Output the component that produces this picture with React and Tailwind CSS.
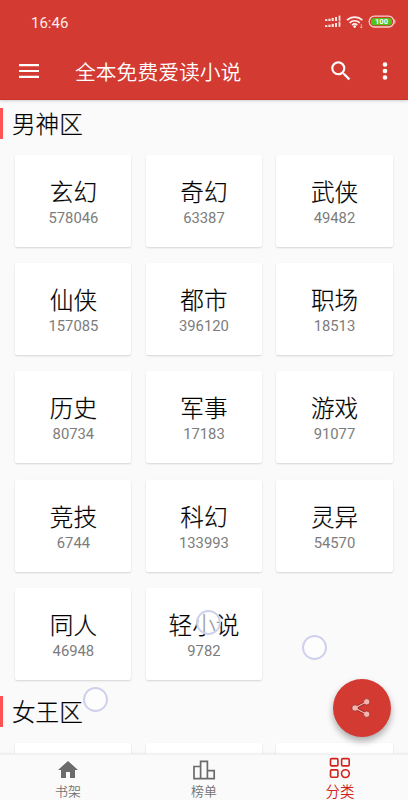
import React from "react";

const MALE = [
  ["玄幻", "578046"],
  ["奇幻", "63387"],
  ["武侠", "49482"],
  ["仙侠", "157085"],
  ["都市", "396120"],
  ["职场", "18513"],
  ["历史", "80734"],
  ["军事", "17183"],
  ["游戏", "91077"],
  ["竞技", "6744"],
  ["科幻", "133993"],
  ["灵异", "54570"],
  ["同人", "46948"],
  ["轻小说", "9782"],
];

function StatusIcons() {
  return (
    <svg width="72" height="14" viewBox="0 0 72 14" fill="none">
      {[0, 6].map((y) => (
        <g key={y} fill="#fbe3e1">
          <rect x="0" y={4.2 + y} width="2.4" height="1.8" />
          <rect x="3.4" y={3.7 + y} width="2.2" height="2.3" />
          <rect x="6.6" y={2.9 + y} width="2.2" height="3.1" />
          <rect x="10" y={2 + y} width="2" height="4" />
          <rect x="13.6" y={0.6 + y} width="1.8" height="5.2" />
        </g>
      ))}
      <g stroke="#fdeeed" strokeWidth="1.7">
        <path d="M22 5.2a11 11 0 0 1 15.4 0" />
        <path d="M24.6 7.8a7.4 7.4 0 0 1 10.2 0" />
        <path d="M27.1 10.2a3.8 3.8 0 0 1 5.2 0" />
      </g>
      <circle cx="29.7" cy="11.6" r="1.3" fill="#fff" />
      <path d="M36.3 9v4M35.2 11.8l1.1 1.2 1.1-1.2" stroke="#f5c5c2" strokeWidth=".8" />
      <rect x="44.2" y="1.2" width="24.6" height="10.8" rx="5.2" stroke="#f7d0cc" strokeWidth="1.3" />
      <rect x="46" y="2.9" width="21" height="7.4" rx="3.6" fill="#4fc41a" />
      <path d="M69.8 4.6v4" stroke="#f7d0cc" strokeWidth="1" />
      <text x="56.5" y="9.4" textAnchor="middle" fill="#fff" fontSize="7.6" fontWeight="700" fontFamily="Roboto, sans-serif">100</text>
    </svg>
  );
}

function Header() {
  return (
    <header className="relative z-10 h-[100px] shrink-0 border-b border-[#c9342e] bg-[#d33a32] text-white shadow-[0_1px_3px_rgba(0,0,0,0.18)]">
      <div className="flex h-11 items-center justify-between pr-[11px] pl-[31px]">
        <span className="pt-px text-[15px] leading-5 text-[#fdebea]">16:46</span>
        <StatusIcons />
      </div>
      <div className="flex h-[54px] items-center pr-[13px] pl-[19px]">
        <svg width="20" height="14" viewBox="0 0 20 14" fill="#fff">
          <path d="M0 0h20v2.2H0zM0 5.9h20v2.2H0zM0 11.8h20V14H0z" />
        </svg>
        <h1 className="ml-9 flex-1 pt-[3px] text-[20.8px] leading-7 font-[350] whitespace-nowrap">全本免费爱读小说</h1>
        <svg width="26" height="26" viewBox="0 0 24 24" fill="#fff" className="mr-[21px]">
          <path d="M15.5 14h-.79l-.28-.27A6.471 6.471 0 0 0 16 9.5 6.5 6.5 0 1 0 9.5 16c1.61 0 3.09-.59 4.23-1.57l.27.28v.79l5 4.99L20.49 19l-4.99-5zm-6 0C7.01 14 5 11.99 5 9.5S7.01 5 9.5 5 14 7.01 14 9.5 11.99 14 9.5 14z" />
        </svg>
        <svg width="20" height="18" viewBox="0 0 20 18" fill="#fff">
          <circle cx="10" cy="2.5" r="2.3" />
          <circle cx="10" cy="9" r="2.3" />
          <circle cx="10" cy="15.5" r="2.3" />
        </svg>
      </div>
    </header>
  );
}

function SectionTitle({ children }) {
  return (
    <h2 className="flex h-[31px] items-center border-l-[3px] border-[#ff5252] pt-1 pl-[9px] text-[23.6px] leading-[31px] font-light text-black [-webkit-text-stroke:0.2px_black]">
      {children}
    </h2>
  );
}

function Card({ title, count }) {
  return (
    <div className="flex flex-col items-center rounded-[2px] bg-white pt-[22px] shadow-[0_1px_2px_rgba(0,0,0,0.15)]">
      <span className="text-[23.6px] leading-8 font-light text-black [-webkit-text-stroke:0.2px_black]">{title}</span>
      <span className="-mt-px text-[14.8px] leading-5 text-[#7c7c7c]">{count}</span>
    </div>
  );
}

function Grid({ children }) {
  return <div className="grid auto-rows-[92px] grid-cols-3 gap-x-[14.5px] gap-y-[16.2px] pr-[15.5px] pl-[15.4px]">{children}</div>;
}

function Ring({ className }) {
  return <span className={"absolute h-[25px] w-[25px] rounded-full border-2 border-[#cfd1ec] bg-white/60 " + className} />;
}

function Tab({ label, active, children }) {
  return (
    <div className={"flex flex-1 flex-col items-center " + (active ? "pt-0.5 text-[#d3211c]" : "pt-[3px] text-[#737373]")}>
      {children}
      <span className={active ? "text-[14.4px] leading-[22px] font-[350]" : "text-[12.9px] leading-[20px] font-[350]"}>{label}</span>
    </div>
  );
}

export default function App() {
  return (
    <div className="relative flex h-[800px] w-[408px] flex-col overflow-hidden bg-[#fafafa] font-[Roboto,'Noto_Sans_CJK_SC',sans-serif]">
      <Header />
      <main className="min-h-0 flex-1 overflow-hidden pt-2">
        <SectionTitle>男神区</SectionTitle>
        <div className="pt-4 pb-4">
          <Grid>
            {MALE.map(([title, count]) => (
              <Card key={title} title={title} count={count} />
            ))}
          </Grid>
        </div>
        <SectionTitle>女王区</SectionTitle>
        <div className="pt-4">
          <Grid>
            <Card />
            <Card />
            <Card />
          </Grid>
        </div>
      </main>
      <nav className="flex h-[46px] shrink-0 border-t border-[#f0f0f0] bg-[#fafafa] shadow-[0_-1px_2px_rgba(0,0,0,0.06)]">
        <Tab label="书架">
          <svg className="shrink-0" width="24" height="24" viewBox="0 0 24 24" fill="#6b6b6b">
            <path d="M10 20v-6h4v6h5v-8h3L12 3 2 12h3v8z" />
          </svg>
        </Tab>
        <Tab label="榜单">
          <svg className="shrink-0" width="24" height="24" viewBox="0 0 24 24" fill="none" stroke="#6b6b6b" strokeWidth="1.7">
            <path d="M2 8.5h6.6v12.1H2zM8.6 3.400h6.800v17.200H8.600zM15.400 12.700h6.800v7.900h-6.800z" />
          </svg>
        </Tab>
        <Tab label="分类" active>
          <svg className="shrink-0" width="22" height="25" viewBox="0 0 22 25" fill="none" stroke="#d3211c" strokeWidth="1.6">
            <rect x="1.5" y="1.6" width="7.4" height="7.3" rx="1.2" />
            <rect x="12.6" y="1.6" width="7.6" height="7.3" rx="1.2" />
            <rect x="1.5" y="12.9" width="7.4" height="7.4" rx="1.2" />
            <circle cx="16.400" cy="16.600" r="3.900" />
          </svg>
        </Tab>
      </nav>
      <Ring className="top-[610px] left-[196px]" />
      <Ring className="top-[635px] left-[302px]" />
      <Ring className="top-[687px] left-[83px]" />
      <button className="absolute top-[679px] left-[333px] z-20 flex h-[58px] w-[58px] items-center justify-center rounded-full bg-[#d33a32] pr-0.5 shadow-[0_4px_7px_rgba(0,0,0,0.32)]">
        <svg width="20" height="20" viewBox="0 0 20 20">
          <path d="M15.7 3.8 4 10l11.7 6.2" fill="none" stroke="#8f211d" strokeWidth="2.6" />
          <g fill="#f4b4b1" stroke="#8f211d" strokeWidth=".7">
            <circle cx="15.7" cy="3.8" r="3.2" />
            <circle cx="4" cy="10" r="3.2" />
            <circle cx="15.7" cy="16.2" r="3.2" />
          </g>
          <path d="M15.7 3.8 4 10l11.7 6.2" fill="none" stroke="#f4b4b1" strokeWidth="1.3" />
        </svg>
      </button>
    </div>
  );
}
